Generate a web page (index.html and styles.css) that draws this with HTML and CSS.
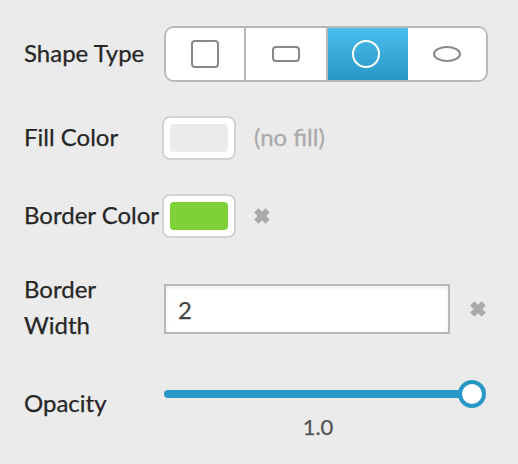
FILE: index.html
```html
<!DOCTYPE html>
<html lang="en">
<head>
<meta charset="utf-8">
<title>Shape settings</title>
<link rel="stylesheet" href="styles.css">
</head>
<body>
<form class="panel">
  <div class="row row-shape">
    <span class="label">Shape Type</span>
    <div class="segments">
      <button type="button" class="segment"><svg width="28" height="28"><rect x="1" y="1" width="26" height="26" rx="3"/></svg></button>
      <button type="button" class="segment wide"><svg width="28" height="16"><rect x="1" y="1" width="26" height="14" rx="3"/></svg></button>
      <button type="button" class="segment wide active"><svg width="28" height="28"><circle cx="14" cy="14" r="13"/></svg></button>
      <button type="button" class="segment"><svg width="28" height="16"><ellipse cx="14" cy="8" rx="13" ry="7"/></svg></button>
    </div>
  </div>
  <div class="row row-color">
    <span class="label">Fill Color</span>
    <span class="swatch"><span class="chip"></span></span>
    <span class="hint">(no fill)</span>
  </div>
  <div class="row row-color">
    <span class="label">Border Color</span>
    <span class="swatch"><span class="chip green"></span></span>
    <svg class="clear clear-color" width="22" height="22" viewBox="0 0 22 22"><path d="M5.3 5.3 16.7 16.7M16.7 5.3 5.3 16.7"/></svg>
  </div>
  <div class="row row-width">
    <span class="label narrow">Border Width</span>
    <input class="field" type="text" value="2">
    <svg class="clear clear-width" width="22" height="22" viewBox="0 0 22 22"><path d="M5.3 5.3 16.7 16.7M16.7 5.3 5.3 16.7"/></svg>
  </div>
  <div class="row row-opacity">
    <span class="label">Opacity</span>
    <div class="slider">
      <div class="slider-line"><span class="track"></span><span class="knob"></span></div>
      <div class="value">1.0</div>
    </div>
  </div>
</form>
</body>
</html>
```
FILE: styles.css
```css
* { box-sizing: border-box; }

body {
  margin: 0;
  background: #ebebeb;
  color: #262626;
  font: 24px/36px Lato, "Liberation Sans", sans-serif;
}

.panel { padding: 26px 24px 0; }

.row { display: flex; align-items: center; }

.label {
  flex: none;
  width: 140px;
  white-space: nowrap;
  -webkit-text-stroke: 0.25px currentColor;
}
.narrow { white-space: normal; padding-right: 40px; }

.row-shape { height: 56px; }
.row-shape .label { margin-top: -2px; }

.segments {
  display: flex;
  width: 324px;
  height: 56px;
  border: 2px solid #b8b8b8;
  border-radius: 10px;
  background: #fff;
  overflow: hidden;
}
.segment {
  display: flex;
  align-items: center;
  justify-content: center;
  width: 78px;
  padding: 0;
  border: 0;
  background: #fff;
}
.segment svg { fill: none; stroke: #888; stroke-width: 2; }
.segment.wide { width: 82px; border-left: 2px solid #b8b8b8; }
.segment.active { background: linear-gradient(#49beee, #2797c6) padding-box; }
.active svg { stroke: #fff; margin-right: 4px; }

.row-color { height: 44px; margin-top: 34px; }
.row-color .label { margin-top: -2px; }

.swatch {
  flex: none;
  width: 74px;
  height: 44px;
  margin-left: -2px;
  padding: 6px;
  border: 2px solid #d3d3d3;
  border-radius: 8px;
  background: #fff;
}
.chip {
  display: block;
  width: 58px;
  height: 28px;
  border-radius: 4px;
  background: #ebebeb;
}
.green { background: #80d135; }

.hint {
  margin: -2px 0 0 18px;
  color: #aaa;
  -webkit-text-stroke: 0.3px currentColor;
}

.clear { flex: none; fill: none; stroke: #aaa; stroke-width: 6; }
.clear-color { margin-left: 15px; }
.clear-width { margin-left: 17px; }

.row-width { height: 72px; margin-top: 33px; }
.field {
  width: 286px;
  height: 50px;
  margin-top: 4px;
  padding: 0 12px;
  border: 2px solid #b8b8b8;
  border-radius: 0;
  background: #fff;
  box-shadow: inset 0 2px 4px rgba(0, 0, 0, 0.08);
  color: #444;
  font: inherit;
  -webkit-text-stroke: 0.25px currentColor;
}
.clear-width { margin-top: 4px; }

.row-opacity { align-items: flex-start; margin-top: 37px; }
.row-opacity .label { margin-top: 5px; }
.slider { width: 322px; }
.slider-line { display: flex; align-items: center; height: 28px; }
.track {
  width: 298px;
  height: 8px;
  border-radius: 4px 0 0 4px;
  background: #2797c6;
}
.knob {
  width: 28px;
  height: 28px;
  margin-left: -4px;
  border: 4px solid #2797c6;
  border-radius: 50%;
  background: #fff;
}
.value {
  width: 308px;
  margin-top: 1px;
  text-align: center;
  color: #555;
  font-size: 22px;
  -webkit-text-stroke: 0.25px currentColor;
}
```
